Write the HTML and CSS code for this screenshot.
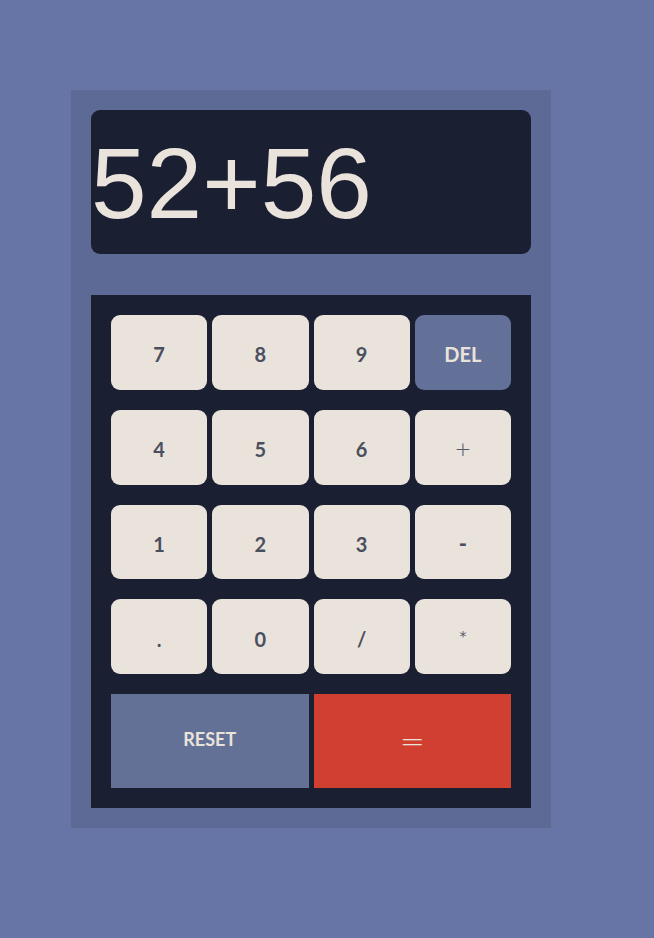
FILE: index.html
```html
<!DOCTYPE html>
<html>
<head>
<meta charset="utf-8">
<link rel="stylesheet" href="styles.css">
</head>
<body>
<main class="calc">
  <div class="display">52+56</div>
  <div class="keypad">
    <button class="key">7</button>
    <button class="key">8</button>
    <button class="key">9</button>
    <button class="key key-del">DEL</button>
    <button class="key">4</button>
    <button class="key">5</button>
    <button class="key">6</button>
    <button class="key key-op">+</button>
    <button class="key">1</button>
    <button class="key">2</button>
    <button class="key">3</button>
    <button class="key key-dash">-</button>
    <button class="key">.</button>
    <button class="key">0</button>
    <button class="key">/</button>
    <button class="key key-star">*</button>
    <button class="key key-reset">RESET</button>
    <button class="key key-eq">=</button>
  </div>
</main>
</body>
</html>
```
FILE: styles.css
```css
html, body {
  margin: 0;
  padding: 0;
}
body {
  background: #6675a6;
  width: 654px;
  height: 938px;
  padding: 90px 0 0 71px;
  box-sizing: border-box;
}
.calc {
  width: 480px;
  box-sizing: border-box;
  padding: 20px;
  background: #5c6a95;
  display: flex;
  flex-direction: column;
  gap: 41px;
}
.display {
  height: 144px;
  box-sizing: border-box;
  background: #1a1f32;
  border-radius: 9px;
  color: #eae3dc;
  font-family: "Liberation Sans", Arial, sans-serif;
  font-size: 100px;
  line-height: 100px;
  padding-top: 23px;
}
.keypad {
  background: #1a1f32;
  padding: 20px;
  display: grid;
  grid-template-columns: repeat(4, 1fr);
  grid-template-rows: repeat(4, 74.75px) 94px;
  column-gap: 5px;
  row-gap: 20px;
}
.key {
  border: none;
  margin: 0;
  border-radius: 9px;
  background: #eae3dc;
  color: #4a4f5e;
  font-family: "Lato", "Noto Sans", sans-serif;
  font-weight: 700;
  font-size: 20px;
  padding: 4px 0 0 0;
}
.key-op {
  font-family: "DejaVu Sans", sans-serif;
  font-weight: 200;
  font-size: 20px;
  color: #555866;
}
.key-dash {
  font-size: 22px;
  font-weight: 900;
}
.key-star {
  font-family: "DejaVu Sans", sans-serif;
  font-weight: 400;
  font-size: 14px;
  padding: 0 0 2px 0;
  color: #555866;
}
.key-del {
  background: #637097;
  color: #eae3dc;
  font-size: 20px;
}
.key-reset {
  grid-column: span 2;
  border-radius: 0;
  background: #647196;
  color: #eae3dc;
  font-size: 18px;
  padding: 0 0 4px 0;
}
.key-eq {
  grid-column: span 2;
  border-radius: 0;
  background: #d13f30;
  color: #eae3dc;
  font-family: "DejaVu Sans", sans-serif;
  font-weight: 200;
  font-size: 30px;
  padding: 0;
}
```
